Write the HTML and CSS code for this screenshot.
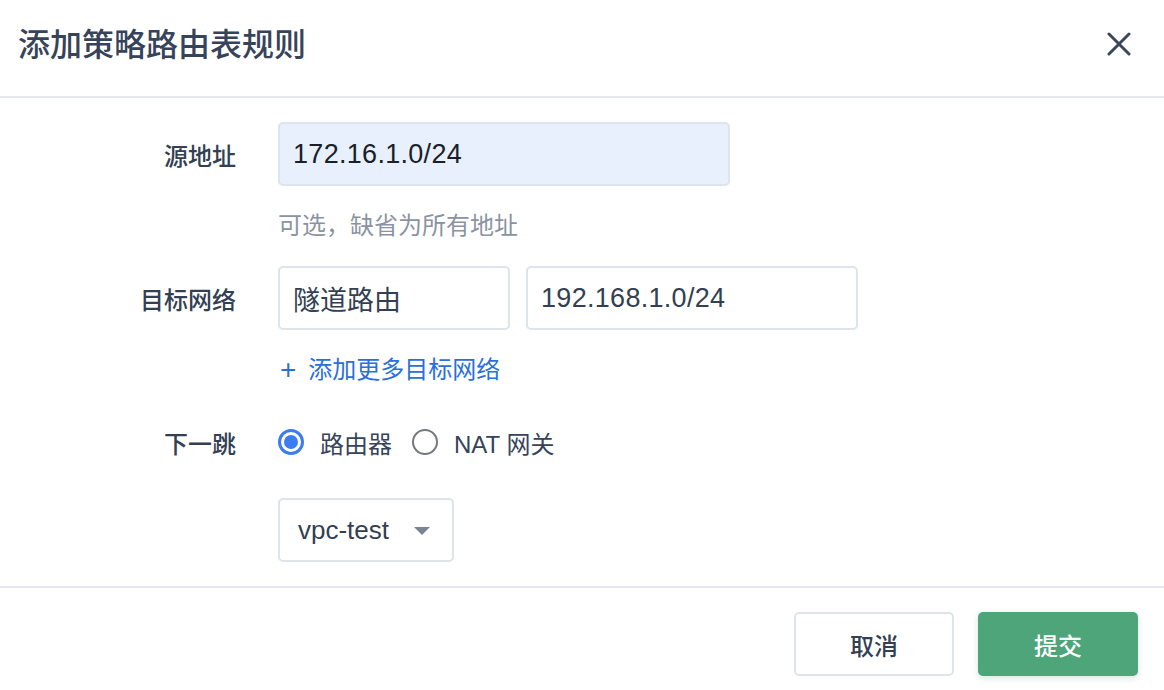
FILE: index.html
```html
<!DOCTYPE html>
<html lang="zh-CN">
<head>
<meta charset="utf-8">
<title>添加策略路由表规则</title>
<link rel="stylesheet" href="styles.css">
</head>
<body>
<div class="dialog">
  <div class="header">
    <div class="title">添加策略路由表规则</div>
    <button class="close" aria-label="关闭">
      <svg width="24" height="24" viewBox="0 0 24 24"><path d="M2 2 L22 22 M22 2 L2 22" stroke="#3a4659" stroke-width="3" stroke-linecap="round" fill="none"/></svg>
    </button>
  </div>
  <div class="body">
    <div class="row">
      <div class="label">源地址</div>
      <div class="field input autofill w-src">172.16.1.0/24</div>
    </div>
    <div class="hint">可选，缺省为所有地址</div>
    <div class="row">
      <div class="label">目标网络</div>
      <div class="fields">
        <div class="field input w-type">隧道路由</div>
        <div class="field input w-dst">192.168.1.0/24</div>
      </div>
    </div>
    <div class="addmore"><span class="plus">+</span>添加更多目标网络</div>
    <div class="row row-radio">
      <div class="label">下一跳</div>
      <div class="radios">
        <label class="radio"><span class="dot checked"></span>路由器</label>
        <label class="radio"><span class="dot"></span>NAT 网关</label>
      </div>
    </div>
    <div class="row row-select">
      <div class="label"></div>
      <div class="field select">
        <span>vpc-test</span>
        <span class="caret"></span>
      </div>
    </div>
  </div>
  <div class="footer">
    <button class="btn btn-cancel">取消</button>
    <button class="btn btn-submit">提交</button>
  </div>
</div>
</body>
</html>
```
FILE: styles.css
```css
* { box-sizing: border-box; }
html, body { margin: 0; padding: 0; background: #fff; }
body {
  font-family: "Liberation Sans", "Noto Sans CJK SC", sans-serif;
  color: #36435a;
}
.dialog { width: 1164px; height: 690px; overflow: hidden; }
.header {
  height: 98px;
  display: flex;
  align-items: center;
  justify-content: space-between;
  padding: 0 33px 2px 18px;
  border-bottom: 2px solid #e5e9ef;
}
.title {
  font-size: 32px;
  font-weight: 500;
  color: #36435a;
  margin-top: -10px;
}
.close {
  border: 0;
  background: none;
  padding: 0;
  width: 24px;
  height: 24px;
  margin-top: -6px;
  cursor: pointer;
}
.close svg { display: block; }
.body { padding: 24px 0; }
.row { display: flex; align-items: center; }
.label {
  width: 236px;
  margin-right: 42px;
  text-align: right;
  font-size: 24px;
  font-weight: 500;
  color: #333f52;
  flex: none;
}
.field {
  height: 64px;
  border: 2px solid #dfe3ea;
  border-radius: 5px;
  display: flex;
  align-items: center;
  font-size: 27px;
  color: #333f52;
  background: #fff;
}
.input { padding: 0 12px 0 13px; }
.autofill { background: #e8f0fe; color: #1a1f29; }
.w-src { width: 452px; }
.fields { display: flex; gap: 16px; }
.w-type { width: 232px; }
.w-dst { width: 332px; }
.w-src, .w-dst { letter-spacing: 0.3px; }
.hint {
  margin: 26px 0 26px 278px;
  line-height: 28px;
  font-size: 24px;
  color: #8a93a3;
}
.addmore {
  margin: 26px 0 0 280px;
  line-height: 28px;
  font-size: 24px;
  color: #2a6fdb;
  display: flex;
  align-items: center;
}
.plus { font-size: 28px; margin-right: 12px; font-weight: 500; }
.row-radio { margin-top: 44px; height: 28px; }
.radios { display: flex; align-items: center; }
.radio {
  display: flex;
  align-items: center;
  font-size: 24px;
  color: #36435a;
  margin-right: 20px;
}
.dot {
  width: 26px;
  height: 26px;
  border-radius: 50%;
  border: 2px solid #75797f;
  margin-right: 16px;
  flex: none;
  position: relative;
}
.dot.checked {
  border: 3px solid #3b7cf0;
}
.dot.checked::after {
  content: "";
  position: absolute;
  left: 3px;
  top: 3px;
  width: 14px;
  height: 14px;
  border-radius: 50%;
  background: #3b7cf0;
}
.row-select { margin-top: 42px; }
.select {
  width: 176px;
  padding: 0 22px 0 18px;
  justify-content: space-between;
  font-size: 26px;
}
.caret {
  width: 0;
  height: 0;
  border-left: 8px solid transparent;
  border-right: 8px solid transparent;
  border-top: 8px solid #7b8493;
  margin-top: 2px;
}
.footer {
  border-top: 2px solid #e5e9ef;
  padding: 24px 26px 14px;
  display: flex;
  justify-content: flex-end;
  gap: 24px;
}
.btn {
  width: 160px;
  height: 64px;
  border-radius: 5px;
  font-family: inherit;
  font-size: 24px;
  font-weight: 500;
  cursor: pointer;
}
.btn-cancel {
  background: #fff;
  border: 2px solid #dfe3ea;
  color: #333f52;
}
.btn-submit {
  background: #4ea57a;
  border: 0;
  color: #fff;
  box-shadow: 0 2px 6px rgba(78, 165, 122, 0.25);
}
```
